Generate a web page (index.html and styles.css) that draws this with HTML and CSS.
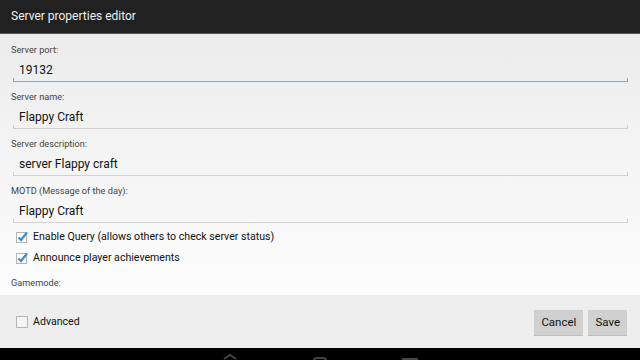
FILE: index.html
```html
<!DOCTYPE html>
<html lang="en">

<head>
  <meta charset="UTF-8">
  <meta name="viewport" content="width=device-width, initial-scale=1.0">
  <title>Server properties editor</title>
  <link rel="stylesheet" href="styles.css">
</head>

<body>
  <header class="titlebar">Server properties editor</header>

  <main class="form">
    <div class="field">
      <label class="label">Server port:</label>
      <div class="input focused">19132</div>
    </div>
    <div class="field">
      <label class="label">Server name:</label>
      <div class="input">Flappy Craft</div>
    </div>
    <div class="field">
      <label class="label">Server description:</label>
      <div class="input">server Flappy craft</div>
    </div>
    <div class="field">
      <label class="label">MOTD (Message of the day):</label>
      <div class="input">Flappy Craft</div>
    </div>

    <div class="check-row">
      <svg class="box" width="12" height="12" viewBox="0 0 12 12">
        <rect x="0.5" y="1.5" width="10" height="10" fill="#fff" stroke="#b4b4b4" />
        <path d="M2.5 6.5 L5 9 L11 1.5" fill="none" stroke="#3d8fc6" stroke-width="2.2" />
      </svg>
      <span>Enable Query (allows others to check server status)</span>
    </div>
    <div class="check-row">
      <svg class="box" width="12" height="12" viewBox="0 0 12 12">
        <rect x="0.5" y="1.5" width="10" height="10" fill="#fff" stroke="#b4b4b4" />
        <path d="M2.5 6.5 L5 9 L11 1.5" fill="none" stroke="#3d8fc6" stroke-width="2.2" />
      </svg>
      <span>Announce player achievements</span>
    </div>

    <div class="label gamemode">Gamemode:</div>
  </main>

  <footer class="actions">
    <div class="check-row advanced">
      <svg class="box" width="12" height="12" viewBox="0 0 12 12">
        <rect x="0.5" y="0.5" width="11" height="11" fill="#f4f4f4" stroke="#b4b4b4" />
      </svg>
      <span>Advanced</span>
    </div>
    <div class="buttons">
      <button class="btn">Cancel</button>
      <button class="btn">Save</button>
    </div>
  </footer>

  <nav class="navbar">
    <svg class="nav-icon" width="20" height="12" viewBox="0 0 20 12">
      <path d="M4 10 L10 6 L16 10" fill="none" stroke="#444" stroke-width="2" />
    </svg>
    <svg class="nav-icon" width="20" height="12" viewBox="0 0 20 12">
      <rect x="4" y="9" width="12" height="8" rx="3" fill="none" stroke="#444" stroke-width="2" />
    </svg>
    <svg class="nav-icon" width="20" height="12" viewBox="0 0 20 12">
      <rect x="3" y="10" width="14" height="8" fill="none" stroke="#444" stroke-width="2" />
    </svg>
  </nav>
</body>

</html>
```

FILE: styles.css
```css
body {
  margin: 0;
  padding: 0;
  width: 640px;
  height: 360px;
  overflow: hidden;
  font-family: Roboto, "Liberation Sans", sans-serif;
  background: #000;
  display: flex;
  flex-direction: column;
}

.titlebar {
  height: 34px;
  line-height: 33px;
  padding-left: 11px;
  background: #212121;
  color: #f0f0f0;
  font-size: 12px;
  border-bottom: 1px solid #555;
  box-sizing: border-box;
}

.form {
  height: 261px;
  box-sizing: border-box;
  padding: 9px 12px 0 11px;
  background: linear-gradient(to bottom, #ececec, #fdfdfd);
}

.field {
  margin-bottom: 8px;
}

.label {
  display: block;
  height: 14px;
  line-height: 14px;
  font-size: 9.2px;
  color: #454545;
}

.input {
  height: 25px;
  line-height: 26px;
  padding-left: 6px;
  margin-left: 2px;
  box-sizing: border-box;
  font-size: 12px;
  color: #111;
  border-bottom: 1px solid #d2d2d2;
  position: relative;
}

.input.focused {
  border-bottom: 1px solid #8fa6b6;
  box-shadow: 0 2px 2px -1px #e2eef5;
}

.input::before,
.input::after {
  content: "";
  position: absolute;
  bottom: 0;
  width: 1px;
  height: 3px;
  background: #d2d2d2;
}

.input::before {
  left: 0;
}

.input::after {
  right: 0;
}

.input.focused::before,
.input.focused::after {
  background: #8fa6b6;
}

.check-row {
  display: flex;
  align-items: center;
  gap: 5px;
  height: 21px;
  padding-left: 5px;
  font-size: 10.6px;
  color: #111;
}

.form .field:nth-of-type(4) {
  margin-bottom: 3px;
}

.gamemode {
  margin-top: 8px;
}

.actions {
  height: 53px;
  box-sizing: border-box;
  background: #eeeeee;
  display: flex;
  align-items: center;
  justify-content: space-between;
  padding: 0 13px 0 11px;
}

.advanced {
  font-size: 10.6px;
}

.buttons {
  display: flex;
  gap: 5px;
  margin-top: 2px;
}

.btn {
  height: 26px;
  padding: 0 7px;
  border: none;
  border-bottom: 1px solid #bdbdbd;
  background: #d0d0d0;
  font-family: Roboto, "Liberation Sans", sans-serif;
  font-size: 11.5px;
  color: #111;
}

.navbar {
  flex: 1;
  background: #000;
  display: flex;
  justify-content: center;
  gap: 70px;
  align-items: flex-start;
  overflow: hidden;
}

.nav-icon {
  margin-top: 1px;
}
```
